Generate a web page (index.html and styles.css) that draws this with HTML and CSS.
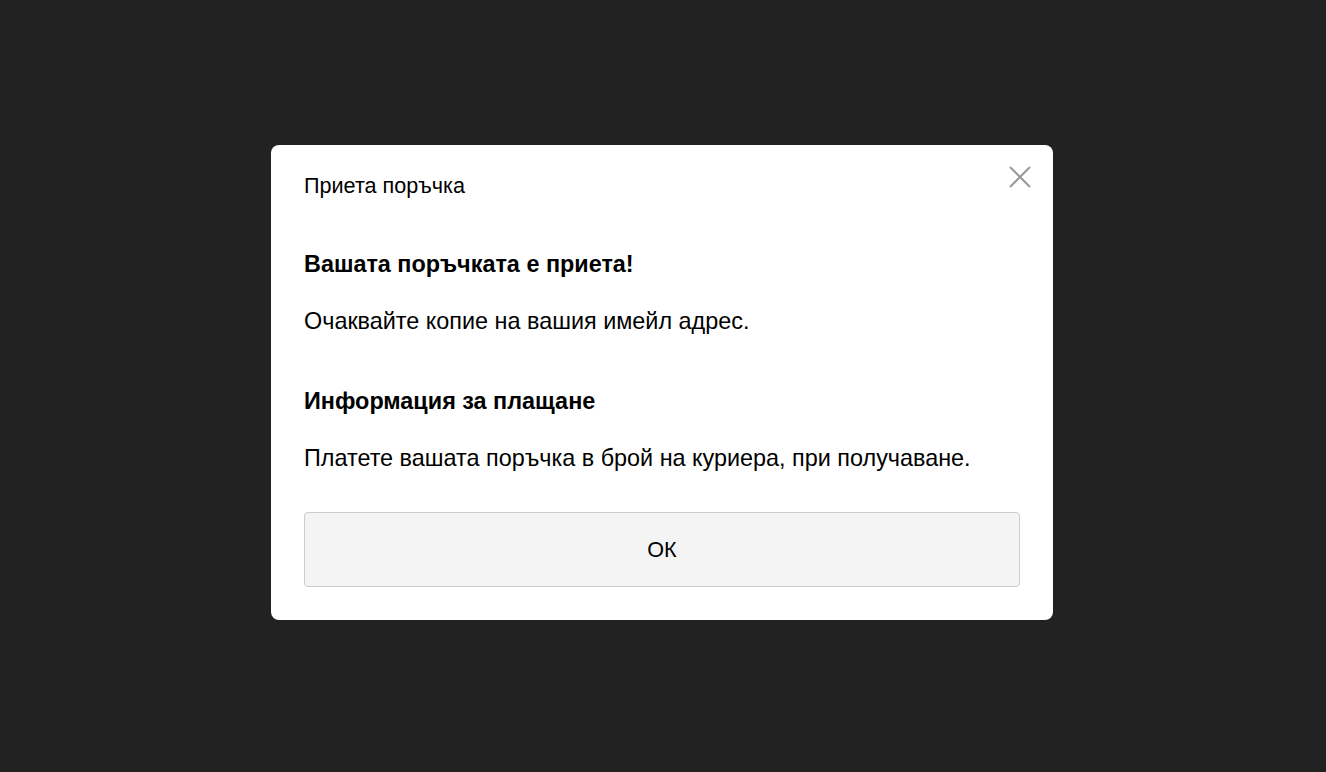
FILE: index.html
```html
<!DOCTYPE html>
<html lang="bg">
<head>
<meta charset="utf-8">
<title>Приета поръчка</title>
<link rel="stylesheet" href="styles.css">
</head>
<body>
<div class="overlay">
  <div class="dialog">
    <button class="close" aria-label="Затвори">
      <svg width="24" height="24" viewBox="0 0 24 24"><path d="M2 2 L22 22 M22 2 L2 22" stroke="#999" stroke-width="2" fill="none"/></svg>
    </button>
    <div class="title">Приета поръчка</div>
    <div class="content">
      <h3 class="heading">Вашата поръчката е приета!</h3>
      <p class="text">Очаквайте копие на вашия имейл адрес.</p>
      <h3 class="heading heading-gap">Информация за плащане</h3>
      <p class="text">Платете вашата поръчка в брой на куриера, при получаване.</p>
    </div>
    <button class="ok">ОК</button>
  </div>
</div>
</body>
</html>
```

FILE: styles.css
```css
html, body {
  margin: 0;
  padding: 0;
  height: 100%;
  background: #222222;
  font-family: "Liberation Sans", Arial, sans-serif;
}
.overlay {
  height: 100%;
  display: flex;
  align-items: center;
  justify-content: center;
}
.dialog {
  position: relative;
  width: 782px;
  box-sizing: border-box;
  margin: 0 2px 7px 0;
  background: #fff;
  border-radius: 8px;
  padding: 28px 33px 33px 33px;
  color: #000;
}
.close {
  position: absolute;
  top: 20px;
  right: 21px;
  width: 24px;
  height: 24px;
  padding: 0;
  border: 0;
  background: none;
  cursor: pointer;
}
.close svg { display: block; }
.title {
  font-size: 21.6px;
  line-height: 26px;
}
.content {
  padding-top: 51px;
}
.heading {
  margin: 0;
  font-size: 23.4px;
  font-weight: bold;
  line-height: 28px;
}
.heading-gap {
  margin-top: 52px;
}
.text {
  margin: 29px 0 0 0;
  font-size: 23.4px;
  line-height: 28px;
}
.ok {
  display: block;
  width: 100%;
  height: 75px;
  margin-top: 40px;
  background: #f4f4f4;
  border: 1px solid #cccccc;
  border-radius: 4px;
  font-family: "Liberation Sans", Arial, sans-serif;
  font-size: 21.6px;
  color: #000;
}
```
